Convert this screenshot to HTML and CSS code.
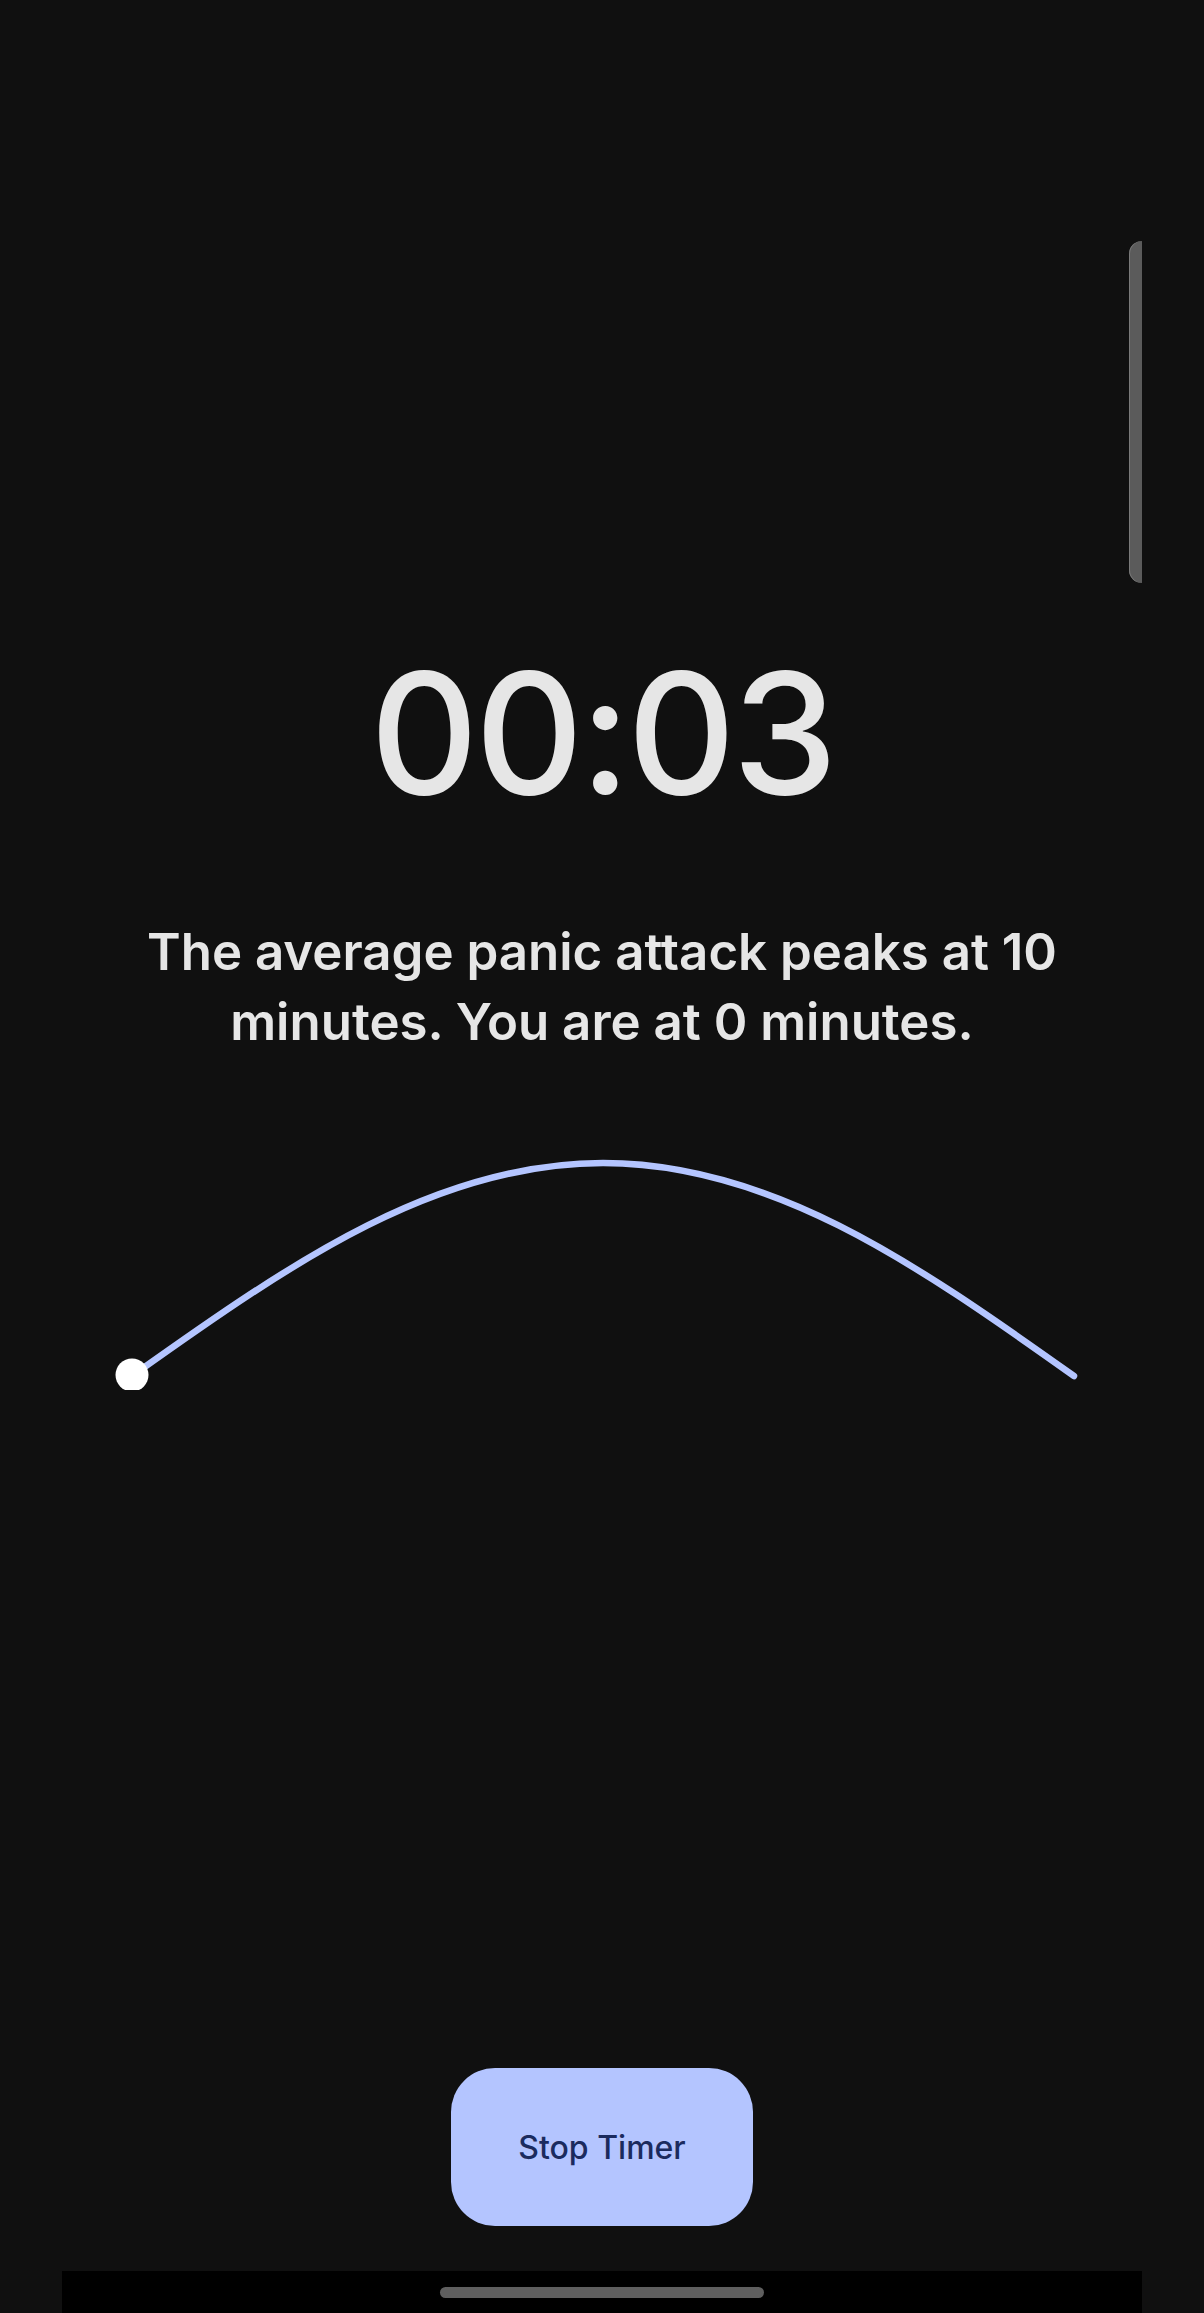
FILE: index.html
```html
<!DOCTYPE html>
<html lang="en">
  <head>
    <meta charset="UTF-8" />
    <meta name="viewport" content="width=device-width, initial-scale=1.0" />
    <title>Panic Timer</title>
    <link rel="stylesheet" href="styles.css">
  </head>
  <body>
    <div class="screen">
      <div class="scrollbar"></div>

      <div class="timer">00:03</div>

      <p class="message">
        The average panic attack peaks at 10 minutes. You are at 0 minutes.
      </p>

      <svg class="curve" viewBox="0 0 1080 260" width="1080" height="260">
        <path
          d="M 70 246 C 148.5 190.2, 227 134.8, 305.5 95.4 C 384 56, 462.5 33, 541 33 C 619.5 33, 698 56, 776.5 95.4 C 855 134.8, 933.5 190.2, 1012 246"
          fill="none"
          stroke="#b4c5ff"
          stroke-width="6.5"
          stroke-linecap="round"
        />
        <circle cx="70" cy="245" r="16.5" fill="#ffffff" />
      </svg>

      <button class="stop-btn" type="button">Stop Timer</button>

      <div class="nav-bar">
        <div class="home-pill"></div>
      </div>
    </div>
  </body>
</html>
```

FILE: styles.css
```css
body {
  margin: 0;
  padding: 0;
  background-color: #101010;
  font-family: Inter, "Noto Sans", sans-serif;
  color: #e6e6e6;
}
.screen {
  position: relative;
  width: 1080px;
  height: 2313px;
  margin: 0 auto;
  display: flex;
  flex-direction: column;
  align-items: center;
}
.scrollbar {
  position: absolute;
  top: 241px;
  right: 0;
  width: 13px;
  height: 342px;
  background: #5b5b5b;
  border-radius: 13px 0 0 13px;
  box-shadow: inset 1px 0 0 #7a7a7a;
}
.timer {
  margin-top: 649px;
  font-size: 168px;
  font-weight: 500;
  line-height: 1;
  letter-spacing: -3.5px;
}
.message {
  margin: 100px 0 0;
  padding: 0 40px;
  font-size: 51px;
  font-weight: 600;
  line-height: 70px;
  text-align: center;
}
.curve {
  display: block;
  margin-top: 73px;
}
.stop-btn {
  margin-top: auto;
  margin-bottom: 45px;
  width: 302px;
  height: 158px;
  border: none;
  border-radius: 44px;
  background: #b4c5ff;
  color: #1b2b5e;
  font-family: Inter, "Noto Sans", sans-serif;
  font-size: 32px;
  font-weight: 500;
  cursor: pointer;
}
.nav-bar {
  width: 100%;
  height: 42px;
  background: #000;
  display: flex;
  justify-content: center;
  padding-top: 16px;
  box-sizing: border-box;
}
.home-pill {
  width: 324px;
  height: 11px;
  border-radius: 6px;
  background: #5f5f5f;
}
```
